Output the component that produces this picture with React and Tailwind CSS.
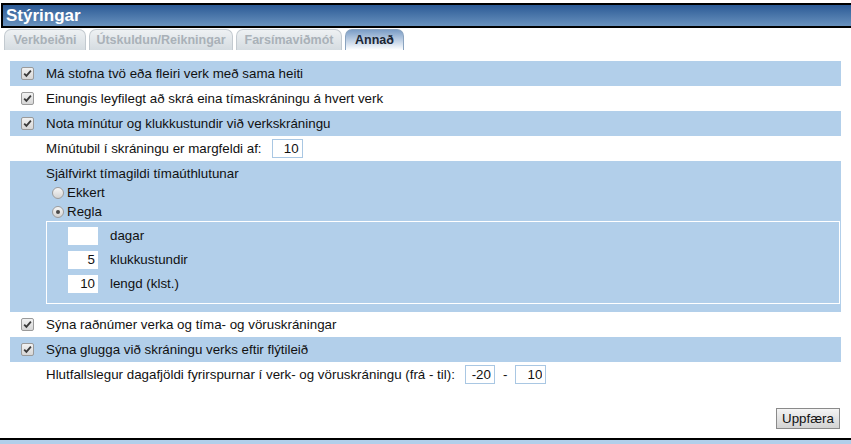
import { useState } from "react";

const font = { fontFamily: '"Liberation Sans", Arial, sans-serif' };

function Check({ checked = true }) {
  return (
    <span className="flex h-[13px] w-[13px] shrink-0 items-center justify-center rounded-[2px] border border-[#9a9a9a] bg-gradient-to-b from-[#f2f2f2] to-[#d6d6d6]">
      {checked && (
        <svg width="9" height="9" viewBox="0 0 9 9">
          <path d="M1.2 4.6 L3.4 6.9 L7.9 1.6" fill="none" stroke="#3a3a3a" strokeWidth="1.8" />
        </svg>
      )}
    </span>
  );
}

function Radio({ checked }) {
  return (
    <span className="flex h-[12px] w-[12px] shrink-0 items-center justify-center rounded-full border border-[#9c9c9c] bg-gradient-to-b from-[#f6f6f6] to-[#d4d4d4]">
      {checked && <span className="h-[4px] w-[4px] rounded-full bg-[#4a4a4a]" />}
    </span>
  );
}

function CheckRow({ label, blue }) {
  return (
    <div className={`flex h-[25px] items-center pl-[11px] ${blue ? "bg-[#b2cfea]" : ""}`}>
      <Check />
      <span className="ml-[12px]">{label}</span>
    </div>
  );
}

function Field({ value, className = "" }) {
  return (
    <input
      defaultValue={value}
      className={`h-[19px] border border-[#a9c7e3] bg-white pr-[3px] text-right text-[13.33px] outline-none ${className}`}
      style={font}
    />
  );
}

const tabs = [
  ["Verkbeiðni", "w-[82px]"],
  ["Útskuldun/Reikningar", "w-[144px]"],
  ["Farsímaviðmót", "w-[106px]"],
  ["Annað", "w-[59px]"],
];

export default function App() {
  const [active, setActive] = useState(3);
  const [rule, setRule] = useState("regla");

  return (
    <div className="relative h-[444px] w-[851px] overflow-hidden bg-white text-[13.33px] text-[#111]" style={font}>
      <div className="ml-px mt-[3px] flex h-[25px] items-center border-y-2 border-l-2 border-black bg-gradient-to-b from-[#2c5b96] to-[#6891bd] pl-[3px]">
        <span className="text-[17px] font-bold leading-none text-white">Stýringar</span>
      </div>

      <div className="ml-[4px] mt-px flex h-[21px] gap-[3px]">
        {tabs.map(([t, w], i) => (
          <button
            key={t}
            onClick={() => setActive(i)}
            className={`${w} flex items-center justify-center rounded-t-[7px] border border-b-0 text-[12.5px] font-bold ${
              active === i
                ? "border-[#8aa3bf] bg-gradient-to-b from-[#7b9dc6] to-white text-[#1b2635]"
                : "border-[#c3cad0] bg-gradient-to-b from-[#eef1f3] to-[#d5dce1] text-[#a9b1b8]"
            }`}
          >
            {t}
          </button>
        ))}
      </div>

      <div className="mx-[10px] mt-[11px]">
        <CheckRow blue label="Má stofna tvö eða fleiri verk með sama heiti" />
        <CheckRow label="Einungis leyfilegt að skrá eina tímaskráningu á hvert verk" />
        <CheckRow blue label="Nota mínútur og klukkustundir við verkskráningu" />
        <div className="flex h-[25px] items-center pl-[36px]">
          <span>Mínútubil í skráningu er margfeldi af:</span>
          <Field value="10" className="ml-[10px] w-[31px]" />
        </div>

        <div className="bg-[#b2cfea] pb-[8px] pl-[36px] pr-px pt-[5px]">
          <div className="h-[16px] leading-[16px]">Sjálfvirkt tímagildi tímaúthlutunar</div>
          <label className="ml-[6px] mt-[2px] flex h-[17px] items-center gap-[3px]" onClick={() => setRule("ekkert")}>
            <Radio checked={rule === "ekkert"} />
            <span>Ekkert</span>
          </label>
          <label className="ml-[6px] mt-[2px] flex h-[17px] items-center gap-[3px]" onClick={() => setRule("regla")}>
            <Radio checked={rule === "regla"} />
            <span>Regla</span>
          </label>
          <div className="mt-[1px] flex flex-col gap-[6px] border border-white pb-[10px] pl-[21px] pt-[5px]">
            {[["", "dagar"], ["5", "klukkustundir"], ["10", "lengd (klst.)"]].map(([v, l]) => (
              <div key={l} className="flex h-[18px] items-center">
                <input
                  defaultValue={v}
                  className="h-[18px] w-[30px] bg-white pr-[3px] text-right text-[13.33px] outline-none"
                  style={font}
                />
                <span className="ml-[12px]">{l}</span>
              </div>
            ))}
          </div>
        </div>

        <CheckRow label="Sýna raðnúmer verka og tíma- og vöruskráningar" />
        <CheckRow blue label="Sýna glugga við skráningu verks eftir flýtileið" />
        <div className="flex h-[25px] items-center pl-[36px]">
          <span>Hlutfallslegur dagafjöldi fyrirspurnar í verk- og vöruskráningu (frá - til):</span>
          <Field value="-20" className="ml-[10px] w-[30px]" />
          <span className="mx-[8px]">-</span>
          <Field value="10" className="w-[31px]" />
        </div>

        <div className="mt-[21px] flex justify-end pr-px">
          <button className="h-[21px] w-[64px] border border-[#8a8a8a] bg-gradient-to-b from-[#f4f4f4] to-[#d3d3d3] text-[13.33px] text-[#111]">
            Uppfæra
          </button>
        </div>
      </div>

      <div className="absolute bottom-0 left-0 right-0 h-[6px] border-t-2 border-black bg-[#b2cfea]" />
    </div>
  );
}
